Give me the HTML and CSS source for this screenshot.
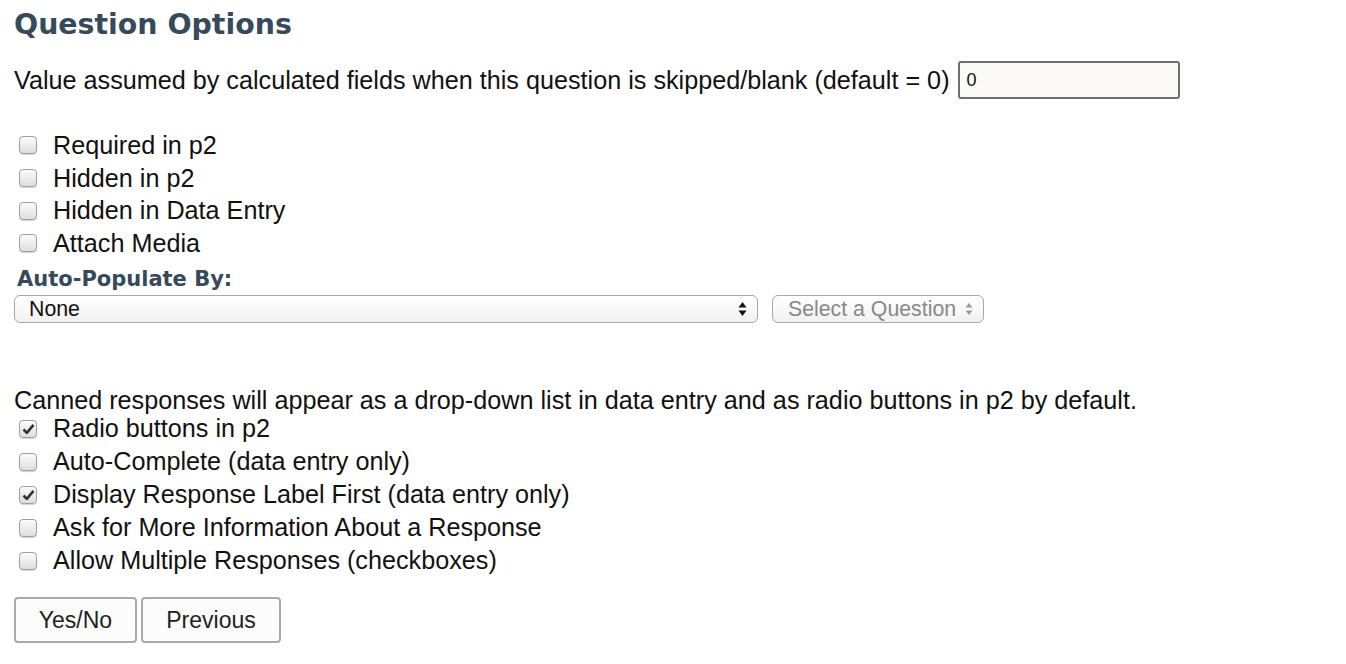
FILE: index.html
```html
<!DOCTYPE html>
<html>
<head>
<meta charset="utf-8">
<link rel="stylesheet" href="styles.css">
</head>
<body>
<h1 class="title">Question Options</h1>
<div class="value-row">
  <span class="value-label">Value assumed by calculated fields when this question is skipped/blank (default = 0)</span>
  <span class="text-input">0</span>
</div>
<div class="opts first-group">
  <label class="opt"><span class="box"></span>Required in p2</label>
  <label class="opt"><span class="box"></span>Hidden in p2</label>
  <label class="opt"><span class="box"></span>Hidden in Data Entry</label>
  <label class="opt"><span class="box"></span>Attach Media</label>
</div>
<div class="sub-title">Auto-Populate By:</div>
<div class="select-row">
  <div class="select main-select"><span>None</span>
    <svg class="arrows" width="9" height="16" viewBox="0 0 9 16"><path d="M4.5 1 L8.5 6.5 H0.5 Z M4.5 15 L8.5 9.5 H0.5 Z" fill="#111"/></svg>
  </div>
  <div class="select q-select"><span>Select a Question</span>
    <svg class="arrows" width="8" height="14" viewBox="0 0 8 14"><path d="M4 1 L7.5 5.5 H0.5 Z M4 13 L7.5 8.5 H0.5 Z" fill="#999"/></svg>
  </div>
</div>
<p class="canned">Canned responses will appear as a drop-down list in data entry and as radio buttons in p2 by default.</p>
<div class="opts second-group">
  <label class="opt"><span class="box checked"><svg width="13" height="12" viewBox="0 0 13 12"><path d="M1.5 6.5 L4.8 9.8 L11.5 1.8" fill="none" stroke="#333" stroke-width="2.6" stroke-linejoin="round"/></svg></span>Radio buttons in p2</label>
  <label class="opt"><span class="box"></span>Auto-Complete (data entry only)</label>
  <label class="opt"><span class="box checked"><svg width="13" height="12" viewBox="0 0 13 12"><path d="M1.5 6.5 L4.8 9.8 L11.5 1.8" fill="none" stroke="#333" stroke-width="2.6" stroke-linejoin="round"/></svg></span>Display Response Label First (data entry only)</label>
  <label class="opt"><span class="box"></span>Ask for More Information About a Response</label>
  <label class="opt"><span class="box"></span>Allow Multiple Responses (checkboxes)</label>
</div>
<div class="buttons">
  <button class="btn yes">Yes/No</button>
  <button class="btn prev">Previous</button>
</div>
</body>
</html>
```
FILE: styles.css
```css
html, body {
  margin: 0;
  padding: 0;
  background: #fff;
}
body {
  padding: 0 14px;
  font-family: "Liberation Sans", Arial, sans-serif;
  font-size: 25.2px;
  color: #111;
}
.title {
  margin: 8px 0 0 0;
  font-family: "DejaVu Sans", Verdana, sans-serif;
  font-weight: bold;
  font-size: 28.4px;
  line-height: 34px;
  color: #364a5b;
}
.value-row {
  margin-top: 19px;
  display: flex;
  align-items: center;
  height: 38px;
}
.value-label {
  line-height: 30px;
}
.text-input {
  margin-left: 8px;
  box-sizing: border-box;
  width: 222px;
  height: 38px;
  border: 2px solid #6e6e6e;
  border-radius: 3px;
  background: #fbfaf4;
  font-size: 18px;
  line-height: 34px;
  padding-left: 7px;
  color: #111;
}
.opts {
  display: flex;
  flex-direction: column;
}
.first-group {
  margin-top: 30px;
}
.opt {
  display: flex;
  align-items: center;
  height: 32.7px;
  line-height: 32.7px;
}
.second-group .opt {
  height: 33px;
  line-height: 33px;
}
.box {
  box-sizing: border-box;
  width: 18px;
  height: 18px;
  margin-left: 5px;
  margin-right: 16px;
  border: 1px solid #a0a0a0;
  border-radius: 4px;
  background: linear-gradient(#fbfbfb, #dedede);
  box-shadow: 0 1px 1px rgba(0,0,0,0.18);
  display: flex;
  align-items: center;
  justify-content: center;
}
.sub-title {
  margin-top: 6.5px;
  font-family: "DejaVu Sans", Verdana, sans-serif;
  font-weight: bold;
  font-size: 21px;
  line-height: 26px;
  height: 26px;
  color: #364a5b;
  padding-left: 3px;
}
.select-row {
  margin-top: 3px;
  display: flex;
  gap: 14px;
}
.select {
  box-sizing: border-box;
  height: 28px;
  border: 1.5px solid #a8a8a8;
  border-radius: 6px;
  background: linear-gradient(#ffffff, #f1f1f1);
  display: flex;
  align-items: center;
  justify-content: space-between;
  font-size: 21.3px;
}
.main-select {
  width: 744px;
  padding: 0 10px 0 14px;
  color: #111;
}
.q-select {
  width: 212px;
  padding: 0 10px 0 15px;
  color: #888;
}
.canned {
  margin: 65px 0 0 0;
  line-height: 24px;
  height: 24px;
}
.buttons {
  margin-top: 20px;
  display: flex;
  gap: 4px;
}
.btn {
  box-sizing: border-box;
  height: 46px;
  font-family: "Liberation Sans", Arial, sans-serif;
  font-size: 23px;
  color: #222;
  background: #fcfcfc;
  border: 2px solid #aaaaaa;
  border-radius: 4px;
  padding: 0;
}
.yes {
  width: 123px;
}
.prev {
  width: 140px;
}
```
